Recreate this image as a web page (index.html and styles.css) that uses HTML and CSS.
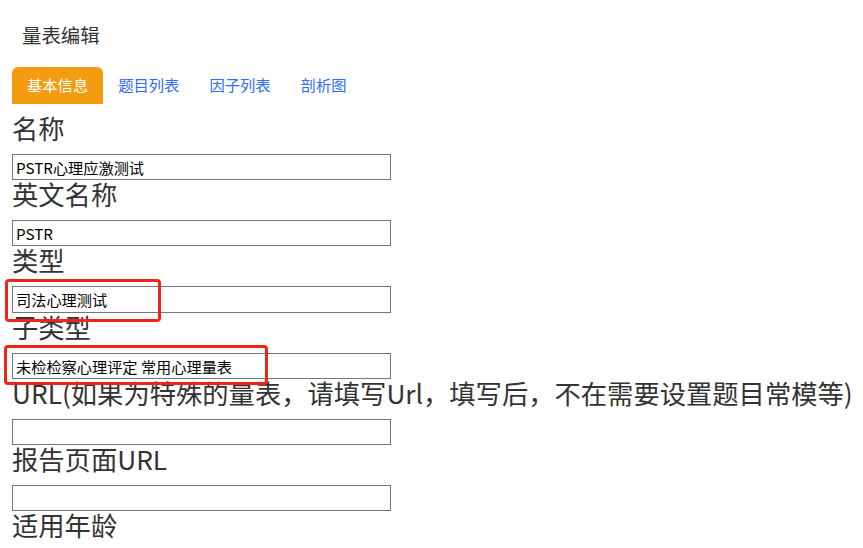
FILE: index.html
```html
<!DOCTYPE html>
<html lang="zh-CN">
<head>
<meta charset="utf-8">
<title>量表编辑</title>
<link rel="stylesheet" href="styles.css">
</head>
<body>
<div class="page">
  <h1 class="title">量表编辑</h1>
  <ul class="tabs">
    <li class="tab active">基本信息</li>
    <li class="tab">题目列表</li>
    <li class="tab">因子列表</li>
    <li class="tab">剖析图</li>
  </ul>
  <form class="form">
    <label class="label">名称</label>
    <input class="field" type="text" value="PSTR心理应激测试">
    <label class="label">英文名称</label>
    <input class="field" type="text" value="PSTR">
    <label class="label">类型</label>
    <input class="field" type="text" value="司法心理测试">
    <label class="label">子类型</label>
    <input class="field" type="text" value="未检检察心理评定 常用心理量表">
    <label class="label">URL(如果为特殊的量表，请填写Url，填写后，不在需要设置题目常模等)</label>
    <input class="field" type="text" value="">
    <label class="label">报告页面URL</label>
    <input class="field" type="text" value="">
    <label class="label">适用年龄</label>
    <input class="field" type="text" value="">
  </form>
  <div class="mark mark-type"></div>
  <div class="mark mark-subtype"></div>
</div>
</body>
</html>
```
FILE: styles.css
```css
html, body {
  margin: 0;
  padding: 0;
  background: #fff;
}
body {
  font-family: "Noto Sans CJK SC", "Noto Sans", sans-serif;
  color: #333;
  overflow: hidden;
}
.page {
  position: relative;
  padding: 0 12px;
}
.title {
  margin: 0 0 19px;
  padding: 22px 10px 0;
  font-size: 19.4px;
  line-height: 26px;
  font-weight: normal;
  color: #333;
}
.tabs {
  display: flex;
  list-style: none;
  margin: 0 0 10px;
  padding: 0;
}
.tab {
  box-sizing: border-box;
  height: 37px;
  line-height: 34px;
  padding: 0 15px 3px;
  font-size: 15.3px;
  color: #2f6bff;
  border-radius: 6px 6px 0 0;
}
.tab.active {
  background: #f39c12;
  color: #fff;
}
.form {
  display: flex;
  flex-direction: column;
  align-items: flex-start;
}
.label {
  display: block;
  font-size: 26.3px;
  line-height: 27px;
  margin-bottom: 13px;
  color: #333;
  white-space: nowrap;
}
.field {
  box-sizing: border-box;
  width: 379px;
  height: 26.2px;
  margin: 0;
  padding: 0 3px;
  border: 1px solid #767676;
  border-radius: 0;
  font-family: "Noto Sans CJK SC", "Noto Sans", sans-serif;
  font-size: 15.2px;
  color: #000;
  background: #fff;
}
.mark {
  position: absolute;
  box-sizing: border-box;
  border: 3px solid #f2231b;
  border-radius: 4px;
}
.mark-type {
  left: 5px;
  top: 279px;
  width: 156px;
  height: 43px;
}
.mark-subtype {
  left: 4px;
  top: 345px;
  width: 264px;
  height: 40px;
}
```
